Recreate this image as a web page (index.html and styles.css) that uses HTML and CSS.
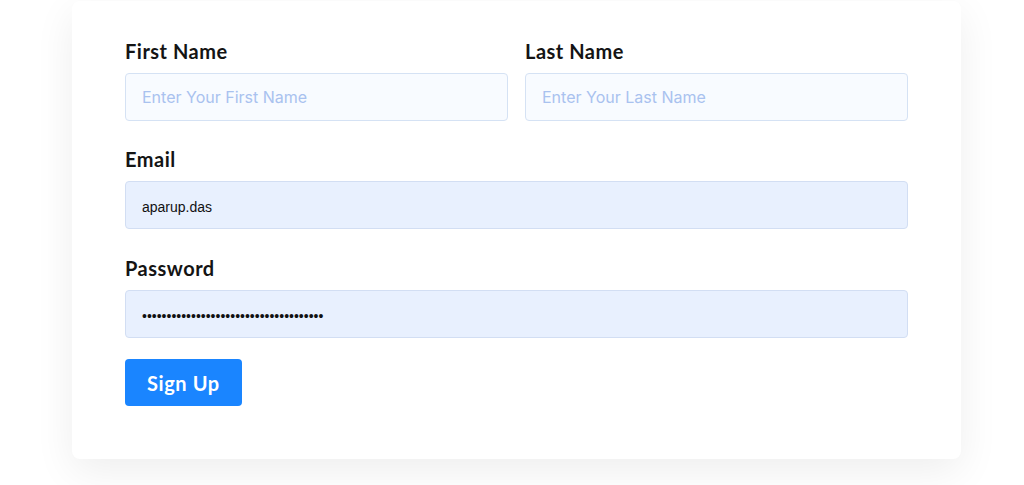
FILE: index.html
```html
<!DOCTYPE html>
<html lang="en">
<head>
    <meta charset="UTF-8">
    <meta name="viewport" content="width=device-width, initial-scale=1.0">
    <title>Sign Up</title>
    <link rel="stylesheet" href="styles.css">
</head>
<body>
    <div class="page">
        <form class="signup-card" onsubmit="return false">
            <div class="name-row">
                <div class="field">
                    <label for="first-name">First Name</label>
                    <input type="text" id="first-name" class="input" placeholder="Enter Your First Name">
                </div>
                <div class="field">
                    <label for="last-name">Last Name</label>
                    <input type="text" id="last-name" class="input" placeholder="Enter Your Last Name">
                </div>
            </div>

            <div class="field">
                <label for="email">Email</label>
                <input type="text" id="email" class="input filled" value="aparup.das">
            </div>

            <div class="field field-last">
                <label for="password">Password</label>
                <input type="password" id="password" class="input filled" value="aparupdas1234567890aparupdas123456789">
            </div>

            <button type="submit" class="signup-btn">Sign Up</button>
        </form>
    </div>
</body>
</html>
```

FILE: styles.css
```css
* {
    margin: 0;
    padding: 0;
    box-sizing: border-box;
}

body {
    background: #fff;
    font-family: Lato, "Noto Sans", sans-serif;
}

.page {
    padding: 1px 63px 26px 72px;
}

.signup-card {
    background: #fff;
    border-radius: 8px;
    padding: 38px 53px 53px;
    box-shadow: 0 12px 40px rgba(0, 0, 0, 0.07);
}

.name-row {
    display: grid;
    grid-template-columns: 1fr 1fr;
    column-gap: 17px;
}

.field {
    margin-bottom: 26px;
}

.field label {
    display: block;
    font-size: 20px;
    line-height: 24px;
    font-weight: 700;
    letter-spacing: 0.5px;
    color: #141414;
    margin-bottom: 10px;
}

.input {
    display: block;
    width: 100%;
    height: 48px;
    padding: 0 16px;
    font-family: Inter, sans-serif;
    font-size: 16px;
    color: #111;
    background: #f8fbff;
    border: 1px solid #d5e2f4;
    border-radius: 4px;
    outline: none;
}

.input::placeholder {
    color: #a9c2ef;
}

/* browser-filled values */
.input.filled {
    font-family: "Liberation Sans", Arial, sans-serif;
    font-size: 14px;
    padding-top: 3px;
    background: #e8f0fe;
    border-color: #d2def3;
}

.field-last {
    padding-top: 1px;
    margin-bottom: 21px;
}

.signup-btn {
    display: block;
    height: 47px;
    padding: 0 22px;
    background: #1a85ff;
    color: #fff;
    border: none;
    border-radius: 4px;
    font-family: Lato, "Noto Sans", sans-serif;
    font-size: 20px;
    font-weight: 700;
    letter-spacing: 0.6px;
    cursor: pointer;
}
```
